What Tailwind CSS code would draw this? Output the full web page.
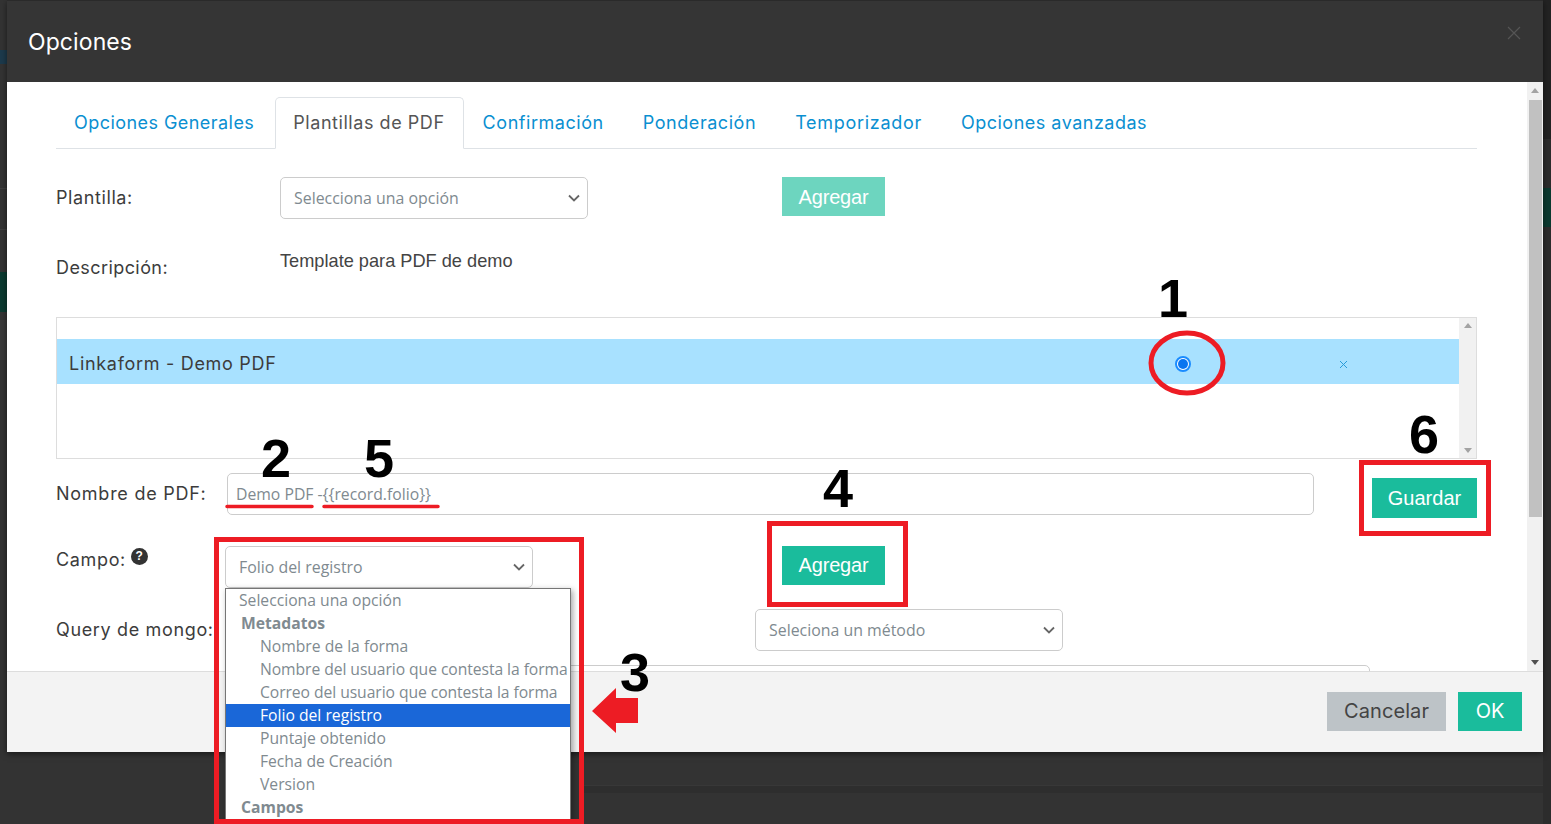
<!DOCTYPE html>
<html>
<head>
    <meta charset="UTF-8" />
    <title>Opciones</title>
    <script src="https://cdn.jsdelivr.net/npm/@tailwindcss/browser@4"></script>
</head>

<body class="bg-[#333333]">
    <div class="relative w-[1551px] h-[824px] overflow-hidden font-['Inter',sans-serif] text-[#3c3c3c]">
        <!-- Backdrop -->
        <div class="absolute left-[584px] right-0 top-[785px] h-[8px] bg-[#2e2e2e] border-t border-[#383838]"></div>
        <div class="absolute left-[1543px] right-0 top-0 h-full bg-[#2c2c2c]"></div>
        <div class="absolute left-[1543px] right-0 top-0 h-[139px] bg-[#232323]"></div>
        <div class="absolute left-[1543px] right-0 top-[188px] h-[39px] bg-[#0b3a30]"></div>
        <div class="absolute left-0 top-[272px] w-[7px] h-[40px] bg-[#0b3a30]"></div>
        <div class="absolute left-0 top-[320px] w-[7px] h-[40px] bg-[#3a3a3a]"></div>
        <div class="absolute left-0 top-[50px] w-[7px] h-[14px] bg-[#1c3a4c]"></div>
        <div class="absolute left-0 top-[188px] w-[7px] h-[42px] border-y border-[#3f3f3f]"></div>

        <!-- Modal -->
        <div class="relative ml-[7px] w-[1536px] h-[752px] flex flex-col shadow-[0_2px_6px_rgba(0,0,0,0.5)]">
            <div class="h-[82px] shrink-0 bg-[#353535] border-t border-[#2a2a2a] flex items-center justify-between pl-[21px] pr-[22px]">
                <h1 class="text-[23px] text-white tracking-[0.1px] mt-[1px]">Opciones</h1>
                <svg class="w-[14px] h-[14px] mt-[-18px]" viewBox="0 0 14 14" fill="none" stroke="#555555" stroke-width="1.2"><path d="M1 1l12 12M13 1L1 13" /></svg>
            </div>

            <div class="flex-1 min-h-0 flex bg-white">
                <div class="flex-1 min-w-0 overflow-hidden pl-[49px] pr-[50px] pt-[15px]">
                    <!-- Tabs -->
                    <div class="flex h-[52px] border-b border-[#dee2e6] text-[18px] tracking-[0.55px] text-[#0a8fd1]">
                        <a class="px-[18px] mr-[3px] flex items-center tracking-[0.45px]">Opciones Generales</a>
                        <a class="pl-[17px] pr-[18px] pb-[2px] mr-[1px] flex items-center h-[52px] bg-white text-[#555] border border-[#dee2e6] border-b-white rounded-t-[5px]">Plantillas de PDF</a>
                        <a class="px-[18px] mr-[3px] flex items-center">Confirmación</a>
                        <a class="px-[18px] mr-[3px] flex items-center">Ponderación</a>
                        <a class="px-[18px] mr-[3px] flex items-center tracking-[0.7px]">Temporizador</a>
                        <a class="px-[18px] mr-[3px] flex items-center tracking-[0.5px]">Opciones avanzadas</a>
                    </div>

                    <!-- Plantilla -->
                    <div class="flex items-start mt-[28px] h-[42px]">
                        <label class="w-[224px] mt-[7px] text-[18px] leading-[27px] tracking-[0.6px]">Plantilla:</label>
                        <div class="w-[308px] h-[42px] flex items-center justify-between pl-[13px] pr-[6px] border border-[#cccccc] rounded-[5px] font-['Open_Sans',sans-serif] text-[15.9px] text-[#808a90]">
                            <span class="mt-[1px]">Selecciona una opción</span>
                            <svg class="w-[14px] h-[14px]" viewBox="0 0 14 14" fill="none" stroke="#666" stroke-width="1.8"><path d="M2 4.5l5 5 5-5" /></svg>
                        </div>
                        <button class="ml-[194px] w-[103px] h-[39px] bg-[#6dd5bf] text-white font-['Liberation_Sans',sans-serif] text-[20px] tracking-[-0.2px]">Agregar</button>
                    </div>

                    <!-- Descripcion -->
                    <div class="flex items-start mt-[28px] h-[70px]">
                        <label class="w-[224px] mt-[7px] text-[18px] leading-[27px] tracking-[0.42px]">Descripción:</label>
                        <p class="mt-[1px] font-['Liberation_Sans',sans-serif] text-[18.2px] leading-[27px] text-[#444]">Template para PDF de demo</p>
                    </div>

                    <!-- Lista de plantillas -->
                    <div class="flex h-[142px] border border-[#dddddd]">
                        <div class="flex-1 pt-[21px]">
                            <div class="h-[45px] bg-[#a8e1ff] flex items-center pl-[12px] relative text-[18px] tracking-[0.7px]">
                                <span class="mt-[3px]">Linkaform - Demo PDF</span>
                                <span class="absolute left-[1118px] top-[17px] w-[16px] h-[16px] rounded-full bg-white border-2 border-[#1a8cff] flex items-center justify-center"><span class="w-[10px] h-[10px] rounded-full bg-[#0a75f0]"></span></span>
                                <svg class="absolute left-[1282px] top-[21px] w-[9px] h-[9px]" viewBox="0 0 9 9" fill="none" stroke="#2a9bd8" stroke-width="1"><path d="M1 1l7 7M8 1L1 8" /></svg>
                            </div>
                        </div>
                        <div class="w-[17px] bg-[#f1f1f1] flex flex-col items-center justify-between py-[5px]">
                            <svg class="w-[8px] h-[5px]" viewBox="0 0 8 5" fill="#a3a3a3"><path d="M4 0l4 5H0z" /></svg>
                            <svg class="w-[8px] h-[5px]" viewBox="0 0 8 5" fill="#a3a3a3"><path d="M0 0h8L4 5z" /></svg>
                        </div>
                    </div>

                    <!-- Nombre de PDF -->
                    <div class="flex items-start mt-[14px] h-[42px]">
                        <label class="w-[171px] mt-[7px] text-[18px] leading-[27px] tracking-[0.75px] whitespace-nowrap">Nombre de PDF:</label>
                        <div class="w-[1087px] h-[42px] flex items-center pl-[8px] pt-[1px] border border-[#cccccc] rounded-[5px] font-['Open_Sans',sans-serif] text-[15.75px] text-[#808a90]">Demo PDF -{{record.folio}}</div>
                        <button class="ml-[58px] mt-[5px] w-[105px] h-[40px] bg-[#1abc9c] text-white font-['Liberation_Sans',sans-serif] text-[20px]">Guardar</button>
                    </div>

                    <!-- Campo -->
                    <div class="flex items-start mt-[31px] h-[42px]">
                        <div class="w-[169px] text-[18px] leading-[27px] tracking-[0.65px] flex items-start">
                            <label>Campo:</label>
                            <span class="ml-[5px] mt-[2px] w-[17px] h-[17px] rounded-full bg-[#333] text-white text-[12px] leading-[17px] font-bold text-center font-['Liberation_Sans',sans-serif]">?</span>
                        </div>
                        <div class="w-[308px] h-[42px] flex items-center justify-between pl-[13px] pr-[6px] border border-[#cccccc] rounded-[5px] font-['Open_Sans',sans-serif] text-[15.9px] text-[#808a90]">
                            <span class="mt-[1px]">Folio del registro</span>
                            <svg class="w-[14px] h-[14px]" viewBox="0 0 14 14" fill="none" stroke="#666" stroke-width="1.8"><path d="M2 4.5l5 5 5-5" /></svg>
                        </div>
                        <button class="ml-[249px] w-[103px] h-[39px] pb-[2px] bg-[#1abc9c] text-white font-['Liberation_Sans',sans-serif] text-[20px] tracking-[-0.2px]">Agregar</button>
                    </div>

                    <!-- Query de mongo -->
                    <div class="flex items-start mt-[21px] h-[42px]">
                        <label class="w-[699px] mt-[7px] text-[18px] leading-[27px] tracking-[0.65px]">Query de mongo:</label>
                        <div class="w-[308px] h-[42px] flex items-center justify-between pl-[13px] pr-[6px] border border-[#cccccc] rounded-[5px] font-['Open_Sans',sans-serif] text-[15.9px] text-[#808a90]">
                            <span class="mt-[1px]">Seleciona un método</span>
                            <svg class="w-[14px] h-[14px]" viewBox="0 0 14 14" fill="none" stroke="#666" stroke-width="1.8"><path d="M2 4.5l5 5 5-5" /></svg>
                        </div>
                    </div>

                    <div class="ml-[171px] mt-[14px] w-[1143px] h-[60px] border border-[#cccccc] rounded-[5px]"></div>
                </div>

                <!-- Scrollbar del cuerpo -->
                <div class="w-[16px] shrink-0 bg-[#f1f1f1] flex flex-col items-center pt-[6px] pb-[6px]">
                    <svg class="w-[8px] h-[5px] shrink-0" viewBox="0 0 8 5" fill="#a3a3a3"><path d="M4 0l4 5H0z" /></svg>
                    <div class="w-[13px] h-[417px] mt-[7px] bg-[#c1c1c1]"></div>
                    <svg class="w-[8px] h-[5px] shrink-0 mt-auto" viewBox="0 0 8 5" fill="#505050"><path d="M0 0h8L4 5z" /></svg>
                </div>
            </div>

            <!-- Footer -->
            <div class="h-[81px] shrink-0 bg-[#f3f3f3] border-t border-[#dddddd] flex items-center justify-end gap-[12px] pr-[21px] pb-[2px]">
                <button class="w-[119px] h-[39px] bg-[#bdc3c7] text-[#444] text-[20px] tracking-[0.1px]">Cancelar</button>
                <button class="w-[64px] h-[39px] bg-[#1abc9c] text-white text-[20px]">OK</button>
            </div>
        </div>

        <!-- Select abierto -->
        <ul class="absolute left-[225px] top-[588px] w-[346px] h-[232px] bg-white border border-[#767676] shadow-[2px_2px_6px_rgba(0,0,0,0.35)] font-['Open_Sans',sans-serif] text-[15.7px] leading-[23px] text-[#808a90] whitespace-nowrap overflow-hidden">
            <li class="pl-[13px]">Selecciona una opción</li>
            <li class="pl-[15px] font-bold">Metadatos</li>
            <li class="pl-[34px]">Nombre de la forma</li>
            <li class="pl-[34px] tracking-[-0.07px]">Nombre del usuario que contesta la forma</li>
            <li class="pl-[34px] tracking-[-0.07px]">Correo del usuario que contesta la forma</li>
            <li class="pl-[34px] bg-[#1a67d8] text-white">Folio del registro</li>
            <li class="pl-[34px]">Puntaje obtenido</li>
            <li class="pl-[34px] tracking-[-0.07px]">Fecha de Creación</li>
            <li class="pl-[34px]">Version</li>
            <li class="pl-[15px] font-bold">Campos</li>
        </ul>

        <!-- Anotaciones -->
        <svg class="absolute left-0 top-0 pointer-events-none" width="1551" height="824" viewBox="0 0 1551 824" fill="none">
            <ellipse cx="1187" cy="363" rx="36" ry="30" stroke="#ed1c24" stroke-width="5" />
            <rect x="216.5" y="539.5" width="365" height="282" stroke="#ed1c24" stroke-width="5" />
            <rect x="769.5" y="523.5" width="136" height="81" stroke="#ed1c24" stroke-width="5" />
            <rect x="1361.5" y="462.5" width="127" height="71" stroke="#ed1c24" stroke-width="5" />
            <path d="M227 506.5h85M324 506.5h114" stroke="#ed1c24" stroke-width="3.5" stroke-linecap="round" />
            <path d="M592 711l24-23v10h22v25h-22v10z" fill="#ed1c24" />
        </svg>
        <span class="absolute left-[1158px] top-[266px] font-['Liberation_Sans',sans-serif] font-bold text-[54px] leading-[64px] text-black">1</span>
        <span class="absolute left-[261px] top-[426px] font-['Liberation_Sans',sans-serif] font-bold text-[54px] leading-[64px] text-black">2</span>
        <span class="absolute left-[364px] top-[426px] font-['Liberation_Sans',sans-serif] font-bold text-[54px] leading-[64px] text-black">5</span>
        <span class="absolute left-[1409px] top-[402px] font-['Liberation_Sans',sans-serif] font-bold text-[54px] leading-[64px] text-black">6</span>
        <span class="absolute left-[823px] top-[456px] font-['Liberation_Sans',sans-serif] font-bold text-[54px] leading-[64px] text-black">4</span>
        <span class="absolute left-[620px] top-[640px] font-['Liberation_Sans',sans-serif] font-bold text-[54px] leading-[64px] text-black">3</span>
    </div>
</body>

</html>
